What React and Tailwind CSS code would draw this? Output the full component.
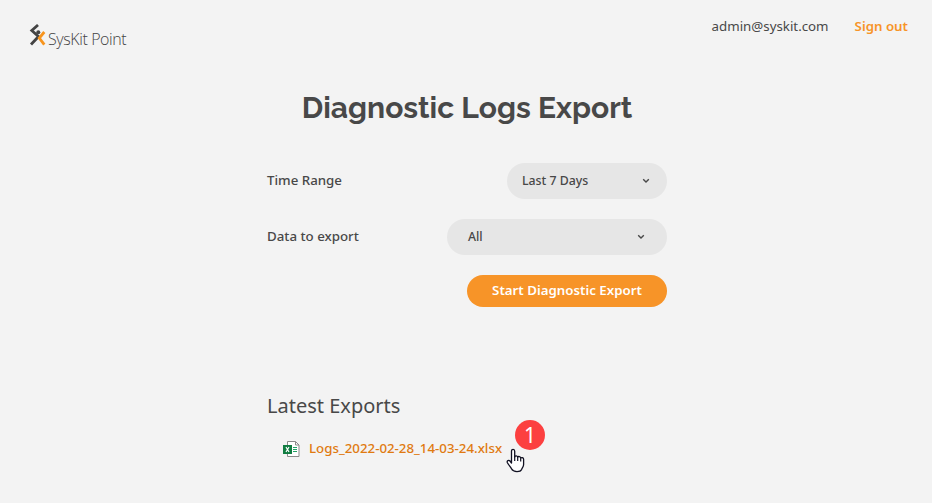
function Logo() {
  return (
    <div className="flex items-start">
      <svg width="17" height="23" viewBox="0 0 17 23" fill="none" className="shrink-0">
        <path d="M9 1 L2.8 6.5 L9.5 12.5 L2 20.5" stroke="#434343" strokeWidth="2.8" strokeLinejoin="miter" />
        <circle cx="9.3" cy="8.3" r="2" fill="#434343" />
        <path d="M15.3 8 L10.3 14 L15.3 20.6" stroke="#f7941d" strokeWidth="2.8" />
      </svg>
      <span className="mt-[4px] ml-[2px] whitespace-nowrap font-['Open_Sans','Noto_Sans',sans-serif] text-[16px] leading-[22px] font-light tracking-[-0.4px] text-[#444]">
        SysKit Point
      </span>
    </div>
  );
}

function Chevron() {
  return (
    <svg width="8" height="6" viewBox="0 0 8 6" fill="none">
      <path d="M1.2 1.2 L4 4 L6.8 1.2" stroke="#484848" strokeWidth="1.4" />
    </svg>
  );
}

function ExcelIcon() {
  return (
    <svg width="17" height="16" viewBox="0 0 17 16" fill="none" className="shrink-0">
      <path d="M4.5 .5H12.5L16 4V15.5H4.5Z" fill="#fff" stroke="#8b8b8b" />
      <path d="M12.5 .5V4H16" stroke="#8b8b8b" />
      <path d="M10 6.5H14M10 8.5H14M10 10.5H14" stroke="#21a366" />
      <path d="M0 4H9V13H0Z" fill="#107c41" />
      <path d="M3 6L6 11M6 6L3 11" stroke="#fff" strokeWidth="1.2" />
    </svg>
  );
}

function HandCursor() {
  return (
    <svg width="19" height="25" viewBox="0 0 19 25" className="absolute top-[448px] left-[506px]">
      <path
        d="M5.5 15V3.2C5.5 .7 8.7 .7 8.7 3.2V9C9 7.3 11.7 7.5 11.7 9.4C12.2 7.9 14.7 8.3 14.7 10.2C15.4 9 17.6 9.6 17.6 11.3V16.5C17.6 19 16 20 15.6 21.5C15 23 13.8 23.6 11 23.6C7.8 23.6 6.5 22.8 5.5 20.8C4.6 19 2.8 17.3 1.4 14.7C.5 12.8 2.8 11.6 4 13Z"
        fill="#fff" stroke="#111122" strokeWidth="1.3" strokeLinejoin="round"
      />
      <path d="M8.7 8.5V13M11.7 9.4V13M14.7 10.2V13.5" stroke="#111122" strokeWidth="1.2" />
    </svg>
  );
}

export default function App() {
  return (
    <div className="relative h-[503px] w-[932px] overflow-hidden bg-[#f3f3f3] font-['Noto_Sans','Open_Sans',sans-serif] text-[#484848]">
      <header className="flex h-[90px] items-start justify-between pt-[16px] pr-[24px] pl-[29px]">
        <div className="pt-[8px]">
          <Logo />
        </div>
        <div className="flex gap-[26px] text-[13.3px] leading-[20px] whitespace-nowrap">
          <span>admin@syskit.com</span>
          <a className="font-semibold text-[#f79428]">Sign out</a>
        </div>
      </header>
      <main className="ml-[267px] w-[400px]">
        <h1 className="-mx-10 text-center font-['Raleway','Lato',sans-serif] text-[30px] leading-[36px] font-bold whitespace-nowrap">
          Diagnostic Logs Export
        </h1>
        <div className="mt-[37px] flex h-[36px] items-center justify-between">
          <span className="text-[13.3px] font-medium">Time Range</span>
          <div className="flex h-[36px] w-[160px] items-center justify-between rounded-[18px] bg-[#e6e6e6] pr-[17px] pl-[15px]">
            <span className="text-[12.3px] font-medium">Last 7 Days</span>
            <Chevron />
          </div>
        </div>
        <div className="mt-[20px] flex h-[36px] items-center justify-between">
          <span className="text-[13.3px] font-medium">Data to export</span>
          <div className="flex h-[36px] w-[220px] items-center justify-between rounded-[18px] bg-[#e6e6e6] pr-[22px] pl-[21px]">
            <span className="text-[12.3px] font-medium">All</span>
            <Chevron />
          </div>
        </div>
        <button className="mt-[20px] ml-auto flex h-[32px] w-[200px] items-center justify-center rounded-full bg-[#f79428] text-[13.3px] font-semibold whitespace-nowrap text-white">
          Start Diagnostic Export
        </button>
        <h2 className="mt-[84px] text-[20px] leading-[30px] whitespace-nowrap">Latest Exports</h2>
        <div className="mt-[18px] flex h-[20px] items-center pl-[16px]">
          <ExcelIcon />
          <a className="ml-[9px] text-[13.3px] font-medium whitespace-nowrap text-[#e07a10]">Logs_2022-02-28_14-03-24.xlsx</a>
        </div>
      </main>
      <div className="absolute top-[420px] left-[515px] flex h-[30px] w-[30px] items-center justify-center rounded-full bg-[#fc4040] text-[21px] leading-none text-white">
        1
      </div>
      <HandCursor />
    </div>
  );
}
